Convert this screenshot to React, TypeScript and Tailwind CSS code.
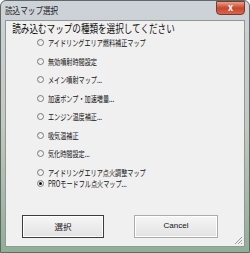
const items = [
  "アイドリングエリア燃料補正マップ",
  "無効噴射時間設定",
  "メイン噴射マップ...",
  "加速ポンプ・加速増量...",
  "エンジン温度補正...",
  "吸気温補正",
  "気化時間設定...",
  "アイドリングエリア点火調整マップ",
  "PROモードフル点火マップ...",
];

const font = { fontFamily: '"Noto Sans CJK JP", "Liberation Sans", sans-serif' };

function Radio({ checked }: { checked?: boolean }) {
  return (
    <span className="w-[7px] h-[7px] rounded-full border border-[#7a7a7a] bg-gradient-to-br from-[#e2e2e2] to-white flex items-center justify-center shrink-0">
      {checked && <span className="w-[3px] h-[3px] rounded-full bg-[#111]" />}
    </span>
  );
}

export default function App() {
  return (
    <div
      className="w-[250px] h-[253px] bg-gradient-to-b from-[#cdd3d9] via-[#c3c8c0] to-[#8fae96] border border-[#5f6a66] rounded-t-[6px] flex flex-col text-[#111]"
      style={font}
    >
      <div className="h-[19px] flex items-start justify-between pl-[4px] pr-[4px]">
        <span className="text-[9.5px] leading-[19px] text-[#222] origin-left scale-x-[0.8] whitespace-nowrap">読込マップ選択</span>
        <button className="w-[29px] h-[14px] rounded-b-[4px] border border-[#7a3a30] bg-gradient-to-b from-[#e8a08c] via-[#c8452c] to-[#d7664c] flex items-center justify-center text-white text-[9px] font-bold">
          x
        </button>
      </div>
      <div className="flex-1 mx-[4px] mb-[5px] bg-[#f0f0f0] border border-[#8f9894] relative">
        <div className="pl-[8px] text-[11px] leading-[14px] text-[#111] origin-left scale-x-[0.78] whitespace-nowrap">
          読み込むマップの種類を選択してください
        </div>
        <div className="flex flex-col pl-[31px] mt-[2px]">
          {items.map((t, i) => (
            <div
              key={t}
              className={
                "flex items-center gap-[4px] h-[11px] text-[8.5px] text-[#111] " +
                (i === 0 || i === 8 ? "mt-0" : "mt-[7.5px]")
              }
            >
              <Radio checked={i === 8} />
              <span className="origin-left scale-x-[0.72] whitespace-nowrap">{t}</span>
            </div>
          ))}
        </div>
        <div className="flex gap-[30px] pl-[16px] mt-[26px]">
          <button className="w-[82px] h-[23px] border border-[#3c3c3c] bg-gradient-to-b from-[#f6f6f6] to-[#e2e2e2] text-[8.5px] text-[#111] shadow-[inset_0_0_0_1px_#fff]">
            選択
          </button>
          <button className="w-[84px] h-[23px] border border-[#acacac] bg-gradient-to-b from-[#f6f6f6] to-[#e2e2e2] text-[8px] text-[#111] shadow-[inset_0_0_0_1px_#fff]" style={{ fontFamily: '"Liberation Sans", sans-serif' }}>
            Cancel
          </button>
        </div>
        <svg className="absolute right-[1px] bottom-[1px]" width="9" height="9" viewBox="0 0 9 9">
          <path d="M8 1 L1 8 M8 4 L4 8 M8 7 L7 8" stroke="#9a9a9a" strokeWidth="1" />
        </svg>
      </div>
    </div>
  );
}
